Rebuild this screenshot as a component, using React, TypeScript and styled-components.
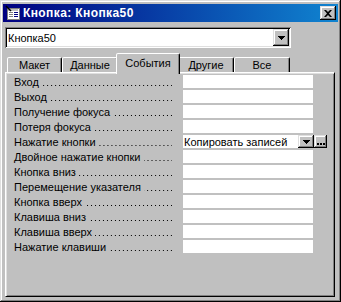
import React from 'react';
import styled, { createGlobalStyle } from 'styled-components';

const GlobalStyle = createGlobalStyle`
  html, body {
    margin: 0;
    padding: 0;
    background: #c0c0c0;
  }
  body {
    font-family: "Liberation Sans", Arial, sans-serif;
    font-size: 11px;
    color: #000;
  }
`;

const Window = styled.div`
  box-sizing: border-box;
  width: 341px;
  height: 302px;
  padding: 4px 3px 3px 3px;
  background: #c0c0c0;
  box-shadow: inset -1px -1px #000, inset 1px 1px #dfdfdf, inset -2px -2px #808080,
    inset 2px 2px #fff;
  display: flex;
  flex-direction: column;
`;

const TitleBar = styled.div`
  height: 18px;
  flex: none;
  display: flex;
  align-items: center;
  padding: 0 2px;
  background: linear-gradient(to right, #000080, #1084d0);
  color: #fff;
  font-weight: bold;
  font-size: 12px;
  letter-spacing: 0.4px;
`;

const TitleIcon = styled.svg`
  width: 16px;
  height: 16px;
  flex: none;
`;

const TitleText = styled.span`
  flex: 1;
  margin-left: 2px;
  white-space: nowrap;
`;

const RaisedButton = styled.div<{ $width: number; $height: number }>`
  box-sizing: border-box;
  flex: none;
  width: ${p => p.$width}px;
  height: ${p => p.$height}px;
  background: #c0c0c0;
  box-shadow: inset -1px -1px #000, inset 1px 1px #dfdfdf, inset -2px -2px #808080,
    inset 2px 2px #fff;
  display: flex;
  align-items: center;
  justify-content: center;
`;

const Body = styled.div`
  flex: 1;
  display: flex;
  flex-direction: column;
  padding: 5px 3px 2px 2px;
`;

const ObjectCombo = styled.div`
  box-sizing: border-box;
  width: 286px;
  height: 21px;
  padding: 2px;
  background: #fff;
  box-shadow: inset 1px 1px #808080, inset -1px -1px #fff, inset 2px 2px #000,
    inset -2px -2px #dfdfdf;
  display: flex;
  align-items: center;
`;

const ComboText = styled.span`
  flex: 1;
  padding-left: 1px;
  white-space: nowrap;
`;

const TabRow = styled.div`
  display: flex;
  align-items: flex-end;
  height: 19px;
  margin-top: 5px;
  padding-left: 2px;
`;

const Tab = styled.div<{ $active?: boolean; $width: number }>`
  box-sizing: border-box;
  position: relative;
  z-index: ${p => (p.$active ? 1 : 0)};
  width: ${p => (p.$active ? p.$width + 4 : p.$width)}px;
  height: ${p => (p.$active ? 21 : 15)}px;
  margin: 0 ${p => (p.$active ? -2 : 0)}px ${p => (p.$active ? -2 : 0)}px;
  padding-top: ${p => (p.$active ? 3 : 1)}px;
  background: #c0c0c0;
  border: 1px solid;
  border-bottom: none;
  border-color: #fff #000 transparent #fff;
  border-radius: 2px 2px 0 0;
  box-shadow: inset -1px 0 #808080;
  line-height: 13px;
  text-align: center;
  white-space: nowrap;
`;

const Panel = styled.div`
  flex: 1;
  box-sizing: border-box;
  border: 1px solid;
  border-color: #fff #000 #000 #fff;
  box-shadow: inset 1px 1px #dfdfdf, inset -1px -1px #808080;
  padding: 2px 0 0 8px;
`;

const PropRow = styled.div`
  display: flex;
  height: 15px;
`;

const PropLabel = styled.div`
  display: flex;
  width: 158px;
  margin-right: 11px;
  line-height: 15px;
  white-space: nowrap;
`;

// dot leaders, right aligned so every row shares the same dot grid
const Leader = styled.span`
  flex: 1;
  margin-left: 3px;
  background: linear-gradient(to left, #000 1px, transparent 1px) right 10px / 4px 1px repeat-x;
`;

const PropValue = styled.div`
  display: flex;
  width: 130px;
  height: 13px;
  background: #fff;
`;

const ValueText = styled.span`
  flex: 1;
  padding-left: 1px;
  line-height: 14px;
  overflow: hidden;
  white-space: nowrap;
`;

const DownArrow = () => (
  <svg width="7" height="4" viewBox="0 0 7 4" shapeRendering="crispEdges">
    <path d="M0 0h7v1h-1v1h-1v1h-1v1h-1v-1h-1v-1h-1v-1h-1z" fill="#000" />
  </svg>
);

const FormIcon = () => (
  <TitleIcon viewBox="0 0 16 16" shapeRendering="crispEdges">
    <rect x="2" y="3" width="12" height="11" fill="#fff" stroke="#808080" />
    <rect x="3" y="4" width="10" height="2" fill="#c0c0c0" />
    <rect x="4" y="7" width="4" height="1" fill="#808080" />
    <rect x="9" y="7" width="4" height="1" fill="#000080" />
    <rect x="4" y="9" width="4" height="1" fill="#808080" />
    <rect x="9" y="9" width="4" height="1" fill="#000080" />
    <rect x="4" y="11" width="4" height="1" fill="#808080" />
    <rect x="9" y="11" width="4" height="1" fill="#000080" />
    <path d="M1 1l5 5" stroke="#000" strokeWidth="1.5" shapeRendering="auto" />
  </TitleIcon>
);

const CloseGlyph = () => (
  <svg width="8" height="7" viewBox="0 0 8 7">
    <path d="M0 0h2l2 2 2-2h2l-3 3.5 3 3.5h-2l-2-2-2 2h-2l3-3.5z" fill="#000" />
  </svg>
);

const BuilderDots = () => (
  <svg width="8" height="2" viewBox="0 0 8 2" shapeRendering="crispEdges" style={{ marginTop: 5 }}>
    <rect x="0" y="0" width="2" height="2" fill="#000" />
    <rect x="3" y="0" width="2" height="2" fill="#000" />
    <rect x="6" y="0" width="2" height="2" fill="#000" />
  </svg>
);

const tabs = [
  { label: 'Макет', width: 55 },
  { label: 'Данные', width: 56 },
  { label: 'События', width: 60, active: true },
  { label: 'Другие', width: 56 },
  { label: 'Все', width: 56 },
];

const events = [
  'Вход',
  'Выход',
  'Получение фокуса',
  'Потеря фокуса',
  'Нажатие кнопки',
  'Двойное нажатие кнопки',
  'Кнопка вниз',
  'Перемещение указателя',
  'Кнопка вверх',
  'Клавиша вниз',
  'Клавиша вверх',
  'Нажатие клавиши',
];

const App = () => (
  <>
    <GlobalStyle />
    <Window>
      <TitleBar>
        <FormIcon />
        <TitleText>Кнопка: Кнопка50</TitleText>
        <RaisedButton $width={16} $height={14}>
          <CloseGlyph />
        </RaisedButton>
      </TitleBar>
      <Body>
        <ObjectCombo>
          <ComboText>Кнопка50</ComboText>
          <RaisedButton $width={16} $height={17}>
            <DownArrow />
          </RaisedButton>
        </ObjectCombo>
        <TabRow>
          {tabs.map(t => (
            <Tab key={t.label} $width={t.width} $active={t.active}>
              {t.label}
            </Tab>
          ))}
        </TabRow>
        <Panel>
          {events.map(name => (
            <PropRow key={name}>
              <PropLabel>
                {name}
                <Leader />
              </PropLabel>
              {name === 'Нажатие кнопки' ? (
                <>
                  <PropValue style={{ width: 115 }}>
                    <ValueText>Копировать записей</ValueText>
                  </PropValue>
                  <RaisedButton $width={16} $height={13}>
                    <DownArrow />
                  </RaisedButton>
                  <RaisedButton $width={13} $height={13}>
                    <BuilderDots />
                  </RaisedButton>
                </>
              ) : (
                <PropValue />
              )}
            </PropRow>
          ))}
        </Panel>
      </Body>
    </Window>
  </>
);

export default App;
